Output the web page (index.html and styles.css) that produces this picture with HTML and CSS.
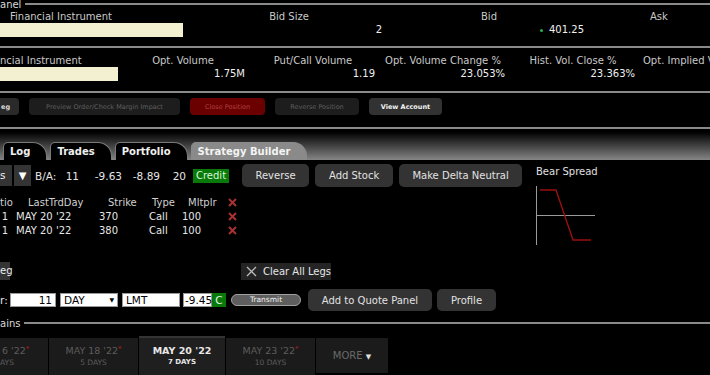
FILE: index.html
```html
<!DOCTYPE html>
<html lang="en">
<head>
  <meta charset="UTF-8">
  <title>Strategy Builder</title>
  <link rel="stylesheet" href="styles.css">
</head>
<body>

  <div class="section-title top-title"><span>anel</span><div class="rule-line"></div></div>

  <div class="quote quote-top">
    <div class="cell inst">
      <div class="label">Financial Instrument</div>
      <div class="inst-box"></div>
    </div>
    <div class="cell"><div class="label">Bid Size</div><div class="value">2</div></div>
    <div class="cell"><div class="label">Bid</div><div class="value"><span class="dot"></span>401.25</div></div>
    <div class="cell"><div class="label">Ask</div><div class="value"></div></div>
  </div>
  <div class="rule"></div>

  <div class="quote quote-bottom">
    <div class="cell inst">
      <div class="label cut">ncial Instrument</div>
      <div class="inst-box"></div>
    </div>
    <div class="cell"><div class="label">Opt. Volume</div><div class="value">1.75M</div></div>
    <div class="cell"><div class="label">Put/Call Volume</div><div class="value">1.19</div></div>
    <div class="cell"><div class="label">Opt. Volume Change %</div><div class="value">23.053%</div></div>
    <div class="cell"><div class="label">Hist. Vol. Close %</div><div class="value">23.363%</div></div>
    <div class="cell last"><div class="label">Opt. Implied V</div><div class="value"></div></div>
  </div>
  <div class="rule"></div>

  <div class="actions">
    <button class="act act-leg">eg</button>
    <button class="act dim preview">Preview Order/Check Margin Impact</button>
    <button class="act danger">Close Position</button>
    <button class="act dim reverse-pos">Reverse Position</button>
    <button class="act strong">View Account</button>
  </div>
  <div class="rule"></div>

  <div class="tabbar">
    <div class="tab first"></div>
    <div class="tab">Log</div>
    <div class="tab">Trades</div>
    <div class="tab">Portfolio</div>
    <div class="tab active">Strategy Builder</div>
  </div>

  <div class="builder">
    <div class="builder-left">
      <div class="ba-bar">
        <span class="box small">s</span>
        <span class="box arrow">&#9660;</span>
        <span class="ba-label">B/A:</span>
        <span class="num w22">11</span>
        <span class="num w43">-9.63</span>
        <span class="num w38">-8.89</span>
        <span class="num w26">20</span>
        <span class="credit">Credit</span>
        <button class="btn w67">Reverse</button>
        <button class="btn w78">Add Stock</button>
        <button class="btn w123">Make Delta Neutral</button>
      </div>

      <div class="legs">
        <div class="leg-row head">
          <span class="c-ratio">tio</span>
          <span class="c-date">LastTrdDay</span>
          <span class="c-strike">Strike</span>
          <span class="c-type">Type</span>
          <span class="c-mult">Mltplr</span>
          <span class="c-x"><svg width="9" height="9" viewBox="0 0 9 9"><path d="M1 1L8 8M8 1L1 8" stroke="#a83232" stroke-width="2"/></svg></span>
        </div>
        <div class="leg-row">
          <span class="c-ratio">1</span>
          <span class="c-date">MAY 20 '22</span>
          <span class="c-strike">370</span>
          <span class="c-type">Call</span>
          <span class="c-mult">100</span>
          <span class="c-x"><svg width="9" height="9" viewBox="0 0 9 9"><path d="M1 1L8 8M8 1L1 8" stroke="#a83232" stroke-width="2"/></svg></span>
        </div>
        <div class="leg-row">
          <span class="c-ratio">1</span>
          <span class="c-date">MAY 20 '22</span>
          <span class="c-strike">380</span>
          <span class="c-type">Call</span>
          <span class="c-mult">100</span>
          <span class="c-x"><svg width="9" height="9" viewBox="0 0 9 9"><path d="M1 1L8 8M8 1L1 8" stroke="#a83232" stroke-width="2"/></svg></span>
        </div>
      </div>

      <div class="clear-row">
        <span class="box leg-box">eg</span>
        <span class="clear-legs">
          <svg width="11" height="11" viewBox="0 0 11 11"><path d="M1 1L10 10M10 1L1 10" stroke="#bbb" stroke-width="1.3"/></svg>
          Clear All Legs
        </span>
      </div>

      <div class="order-row">
        <span class="order-label">r:</span>
        <span class="field qty">11</span>
        <span class="field tif">DAY<span class="caret">&#9660;</span></span>
        <span class="field type">LMT</span>
        <span class="field price">-9.45</span><span class="c-flag">C</span>
        <span class="transmit">Transmit</span>
        <button class="btn w124">Add to Quote Panel</button>
        <button class="btn w59">Profile</button>
      </div>
    </div>

    <div class="builder-chart">
      <div class="chart-title">Bear Spread</div>
      <svg class="payoff" width="64" height="62" viewBox="0 0 64 62">
        <path d="M0.5 0V59M0 29.5H59" stroke="#9a9a9a" stroke-width="1" fill="none"/>
        <path d="M4 4H20L37 54H55" stroke="#9a0f0f" stroke-width="1.4" fill="none"/>
      </svg>
    </div>
  </div>

  <div class="section-title bottom-title"><span>ains</span><div class="rule-line"></div></div>

  <div class="expiries">
    <div class="exp first-exp"><div class="exp-date">6 '22<sup>*</sup></div><div class="exp-days">AYS</div></div>
    <div class="exp"><div class="exp-date">MAY 18 '22<sup>*</sup></div><div class="exp-days">5 DAYS</div></div>
    <div class="exp current"><div class="exp-date">MAY 20 '22</div><div class="exp-days">7 DAYS</div></div>
    <div class="exp"><div class="exp-date">MAY 23 '22<sup>*</sup></div><div class="exp-days">10 DAYS</div></div>
    <div class="exp more">MORE <span class="more-arrow">&#9660;</span></div>
  </div>

</body>
</html>
```

FILE: styles.css
```css
body {
  margin: 0;
  width: 710px;
  height: 375px;
  overflow: hidden;
  background-color: #000;
  color: #e6e6e6;
  font-family: "DejaVu Sans", Verdana, sans-serif;
  font-size: 10px;
}

button {
  font-family: inherit;
  cursor: pointer;
  border: none;
  outline: none;
  padding: 0;
}

/* section headings with a rule */

.section-title {
  display: flex;
  align-items: center;
  height: 10px;
  color: #d8d8d8;
  font-size: 10px;
}

.section-title span {
  padding-right: 4px;
}

.rule-line {
  flex: 1;
  border-top: 2px solid #8a8a8a;
}

.top-title {
  margin-top: -1px;
  margin-bottom: -1px;
}

.rule {
  height: 2px;
  background-color: #8a8a8a;
}

/* quote panel */

.quote {
  display: grid;
  overflow: hidden;
}

.quote-top {
  grid-template-columns: 190px 198px 202px 120px;
  height: 38px;
  padding-top: 3px;
  box-sizing: border-box;
}

.quote-bottom {
  grid-template-columns: 118px 130px 130px 130px 130px 72px;
  height: 43px;
  padding-top: 7px;
  box-sizing: border-box;
}

.label {
  line-height: 12px;
  text-align: center;
  color: #c9c9c9;
  white-space: nowrap;
}

.quote-top .cell:last-child .label {
  padding-left: 60px;
  text-align: left;
}

.last .label {
  text-align: left;
  padding-left: 5px;
  overflow: hidden;
}

.value {
  line-height: 14px;
  text-align: right;
  padding-right: 6px;
  color: #f0f0f0;
}

.quote-bottom .value {
  padding-right: 3px;
}

.inst .label {
  text-align: left;
  padding-left: 10px;
}

.inst .label.cut {
  padding-left: 0;
}

.inst-box {
  height: 14px;
  width: 183px;
  background-color: #f3f0d2;
}

.quote-bottom .inst-box {
  width: 118px;
}

.dot {
  display: inline-block;
  width: 3px;
  height: 3px;
  border-radius: 50%;
  background-color: #2fae4a;
  margin-right: 6px;
  vertical-align: middle;
}

/* action buttons */

.actions {
  display: flex;
  height: 34px;
  padding-top: 5px;
  box-sizing: border-box;
}

.act {
  height: 17px;
  border-radius: 4px;
  font-size: 6.5px;
  font-weight: bold;
  margin-right: 10px;
}

.act-leg {
  width: 19px;
  background-color: #2a2a2a;
  color: #ddd;
  text-align: left;
  padding-left: 1px;
  border-radius: 0 4px 4px 0;
}

.act.dim {
  background-color: #1d1d1d;
  color: #5f5f5f;
  font-weight: normal;
}

.preview {
  width: 151px;
}

.danger {
  width: 75px;
  background-color: #6b0000;
  color: #b04040;
  font-weight: normal;
}

.reverse-pos {
  width: 84px;
}

.strong {
  width: 73px;
  background-color: #323232;
  color: #f2f2f2;
}

/* tabs */

.tabbar {
  display: flex;
  align-items: flex-end;
  gap: 3px;
  height: 31px;
  box-sizing: border-box;
  background: linear-gradient(#000 0, #000 3px, #858585 100%);
}

.tab {
  height: 17px;
  line-height: 17px;
  padding: 0 16px 0 6px;
  background-color: #000;
  border: 1px solid #7a7a7a;
  border-bottom: none;
  border-radius: 5px 14px 0 0;
  font-weight: bold;
  color: #f0f0f0;
}

.tab.first {
  width: 30px;
  margin-left: -54px;
}

.tab.active {
  background-color: #8a8a8a;
  border-color: #8a8a8a;
  color: #f4f4f4;
}

/* strategy builder */

.builder {
  display: flex;
}

.builder-left {
  width: 536px;
}

.ba-bar {
  display: flex;
  align-items: center;
  height: 23px;
  margin-top: 4px;
  font-size: 10.5px;
}

.box {
  display: inline-block;
  background-color: #343434;
  color: #eee;
  text-align: center;
}

.box.small {
  width: 12px;
  height: 21px;
  line-height: 21px;
  text-align: left;
}

.box.arrow {
  width: 17px;
  height: 21px;
  line-height: 21px;
  margin-left: 2px;
  font-size: 10px;
  color: #fff;
}

.ba-label {
  margin-left: 4px;
  width: 22px;
}

.num {
  display: inline-block;
  text-align: right;
}

.w22 { width: 22px; }
.w43 { width: 43px; }
.w38 { width: 38px; }
.w26 { width: 26px; }

.credit {
  margin-left: 7px;
  padding: 0 3px;
  height: 14px;
  line-height: 14px;
  background-color: #097a09;
  color: #d7f5d7;
  font-size: 10px;
}

.btn {
  height: 23px;
  border-radius: 5px;
  background-color: #333;
  color: #e2e2e2;
  font-size: 10px;
  margin-right: 6px;
}

.ba-bar .w67 { margin-left: 13px; }
.w67 { width: 67px; }
.w78 { width: 78px; }
.w123 { width: 123px; }
.w124 { width: 124px; height: 22px; }
.w59 { width: 59px; height: 22px; }

.legs {
  margin-top: 9px;
  font-size: 10px;
}

.leg-row {
  display: grid;
  grid-template-columns: 14px 81px 50px 35px 42px 18px;
  height: 14px;
  line-height: 14px;
  white-space: nowrap;
}

.c-ratio { text-align: right; padding-right: 6px; }
.c-date { padding-left: 2px; }
.c-strike { padding-left: 4px; }
.c-type { padding-left: 4px; }
.c-mult { padding-left: 2px; }
.c-x { padding-left: 6px; }

.head .c-ratio { padding-right: 0; text-align: left; }
.head .c-date { padding-left: 14px; }
.head .c-strike { padding-left: 13px; }
.head .c-type { padding-left: 7px; }
.head .c-mult { padding-left: 8px; }

.head {
  color: #d0d0d0;
}

.c-x svg {
  vertical-align: -1px;
}

.clear-row {
  display: flex;
  align-items: center;
  margin-top: 24px;
  height: 18px;
}

.leg-box {
  width: 10px;
  height: 18px;
  line-height: 18px;
  text-align: left;
}

.clear-legs {
  display: flex;
  align-items: center;
  gap: 6px;
  margin-left: 231px;
  width: 90px;
  height: 17px;
  padding-left: 5px;
  box-sizing: border-box;
  background-color: #242424;
  color: #e6e6e6;
}

.order-row {
  display: flex;
  align-items: center;
  margin-top: 9px;
  height: 22px;
}

.order-label {
  width: 10px;
  font-size: 10.5px;
}

.field {
  display: inline-block;
  height: 14px;
  box-sizing: border-box;
  background-color: #fff;
  border: 1px solid #999;
  color: #000;
  font-size: 10.5px;
  padding: 0 3px;
  line-height: 12px;
}

.qty {
  width: 46px;
  text-align: right;
  margin-right: 4px;
}

.tif {
  display: flex;
  justify-content: space-between;
  width: 58px;
  margin-right: 4px;
}

.caret {
  font-size: 6px;
}

.type {
  width: 58px;
  margin-right: 3px;
}

.price {
  width: 29px;
  padding: 0 1px;
  text-align: right;
}

.c-flag {
  width: 14px;
  height: 14px;
  line-height: 14px;
  text-align: center;
  background-color: #097a09;
  color: #e6f5e6;
  font-size: 10.5px;
}

.transmit {
  width: 70px;
  height: 12px;
  line-height: 10px;
  margin: 0 7px 0 5px;
  box-sizing: border-box;
  border: 1px solid #a0a0a0;
  border-radius: 6px;
  background-color: #5e5e5e;
  color: #f0f0f0;
  font-size: 7.5px;
  text-align: center;
}

.order-row .w124 {
  margin-right: 5px;
}

.builder-chart {
  padding-top: 6px;
}

.chart-title {
  line-height: 12px;
  color: #e0e0e0;
}

.payoff {
  display: block;
  margin-top: 8px;
}

/* expiry strip */

.bottom-title {
  margin-top: 7px;
}

.expiries {
  display: flex;
  gap: 1px;
  margin-top: 8px;
  height: 40px;
}

.exp {
  width: 89px;
  margin-top: 2px;
  background-color: #1b1b1b;
  color: #5d5d5d;
  text-align: center;
}

.first-exp {
  width: 48px;
  text-align: left;
}

.first-exp .exp-date {
  padding-left: 2px;
}

.exp-date {
  margin-top: 6px;
  font-size: 9.5px;
  line-height: 13px;
}

.exp-days {
  font-size: 7.5px;
  line-height: 11px;
}

.exp sup {
  color: #b02020;
  font-size: 7px;
  vertical-align: 3px;
  line-height: 0;
}

.exp.current {
  width: 86px;
  margin-top: 0;
  border-top: 2px solid #343434;
  background-color: #1f1f1f;
  color: #e8e8e8;
  font-weight: bold;
}

.exp.current .exp-days {
  font-size: 7px;
}

.more {
  width: 72px;
  height: 35px;
  line-height: 35px;
  font-size: 10px;
  color: #6a6a6a;
}

.more-arrow {
  color: #e0e0e0;
  font-size: 7px;
}
```
